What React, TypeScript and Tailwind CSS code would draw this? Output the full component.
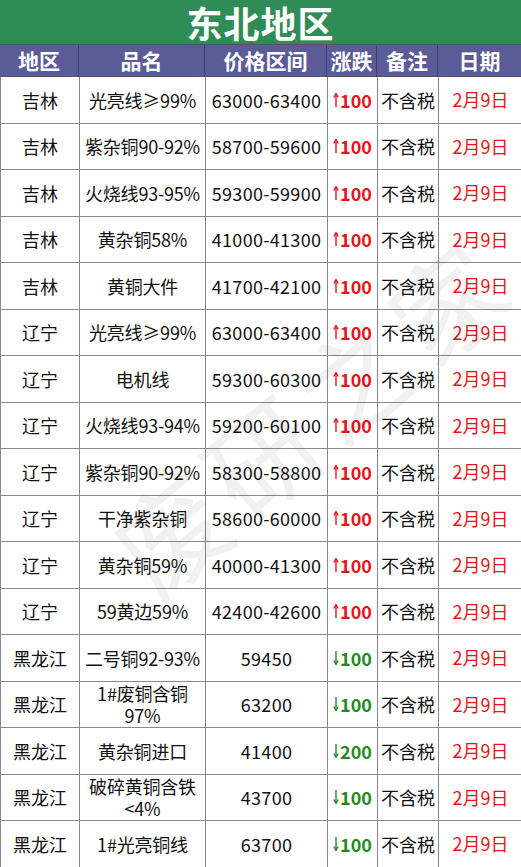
import React from 'react';

type Row = [string, string, string, boolean, string];

const rows: Row[] = [
  ['吉林', '光亮线≥99%', '63000-63400', true, '100'],
  ['吉林', '紫杂铜90-92%', '58700-59600', true, '100'],
  ['吉林', '火烧线93-95%', '59300-59900', true, '100'],
  ['吉林', '黄杂铜58%', '41000-41300', true, '100'],
  ['吉林', '黄铜大件', '41700-42100', true, '100'],
  ['辽宁', '光亮线≥99%', '63000-63400', true, '100'],
  ['辽宁', '电机线', '59300-60300', true, '100'],
  ['辽宁', '火烧线93-94%', '59200-60100', true, '100'],
  ['辽宁', '紫杂铜90-92%', '58300-58800', true, '100'],
  ['辽宁', '干净紫杂铜', '58600-60000', true, '100'],
  ['辽宁', '黄杂铜59%', '40000-41300', true, '100'],
  ['辽宁', '59黄边59%', '42400-42600', true, '100'],
  ['黑龙江', '二号铜92-93%', '59450', false, '100'],
  ['黑龙江', '1#废铜含铜97%', '63200', false, '100'],
  ['黑龙江', '黄杂铜进口', '41400', false, '200'],
  ['黑龙江', '破碎黄铜含铁<4%', '43700', false, '100'],
  ['黑龙江', '1#光亮铜线', '63700', false, '100'],
];

const cols = 'grid grid-cols-[79px_126px_122px_50px_61px_83px]';
const cell = 'flex items-center justify-center text-center border-r border-[#8a8a8a] leading-[1.25]';

function Arrow({ up }: { up: boolean }) {
  return (
    <svg width="6" height="16" viewBox="0 0 6 16" className="mr-[1px] shrink-0" fill="none" stroke="currentColor" strokeWidth="1.4">
      {up ? (
        <>
          <path d="M3 2v13" />
          <path d="M0.8 5.5L3 1.5l2.2 4" strokeLinejoin="round" />
        </>
      ) : (
        <>
          <path d="M3 1v13" />
          <path d="M0.8 10.5L3 14.5l2.2-4" strokeLinejoin="round" />
        </>
      )}
    </svg>
  );
}

export default function App() {
  return (
    <div className="relative w-[521px] h-[867px] overflow-hidden bg-white text-[#111] font-['Microsoft_YaHei','Noto_Sans_CJK_SC',sans-serif]">
      <div className="h-[45px] bg-[#2f8c57] flex items-center justify-center text-white font-bold text-[36px] leading-[40px] tracking-[1px] border-b border-[#4a5a4f]">
        东北地区
      </div>
      <div className={`${cols} h-[32px] bg-[#5b5b98] text-white font-bold text-[21px] border-b border-[#555]`}>
        {['地区', '品名', '价格区间', '涨跌', '备注', '日期'].map((h, i) => (
          <div key={h} className={`flex items-center justify-center ${i < 5 ? 'border-r border-[#3e3e6a]' : ''}`}>{h}</div>
        ))}
      </div>
      {rows.map((r, i) => (
        <div key={i} className={`${cols} h-[46.5px] border-b border-[#8a8a8a] text-[18px] border-l`}>
          <div className={cell}>{r[0]}</div>
          <div className={`${cell} tracking-[-0.2px]`}>
            <span className={r[1].includes('1#废') ? 'w-[100px]' : r[1].includes('破碎') ? 'w-[112px]' : ''}>{r[1]}</span>
          </div>
          <div className={`${cell} tracking-[0.3px]`}>{r[2]}</div>
          <div className={`${cell} font-bold ${r[3] ? 'text-[#e8141b]' : 'text-[#238b22]'}`}>
            <Arrow up={r[3]} />{r[4]}
          </div>
          <div className={cell}>不含税</div>
          <div className="flex items-center justify-center text-[#e8141b]">2月9日</div>
        </div>
      ))}
      <div className="pointer-events-none absolute left-[70px] top-[330px] rotate-[-40deg] text-[110px] text-[#000] opacity-[0.05] whitespace-nowrap tracking-[10px]">
        废研之家
      </div>
    </div>
  );
}
